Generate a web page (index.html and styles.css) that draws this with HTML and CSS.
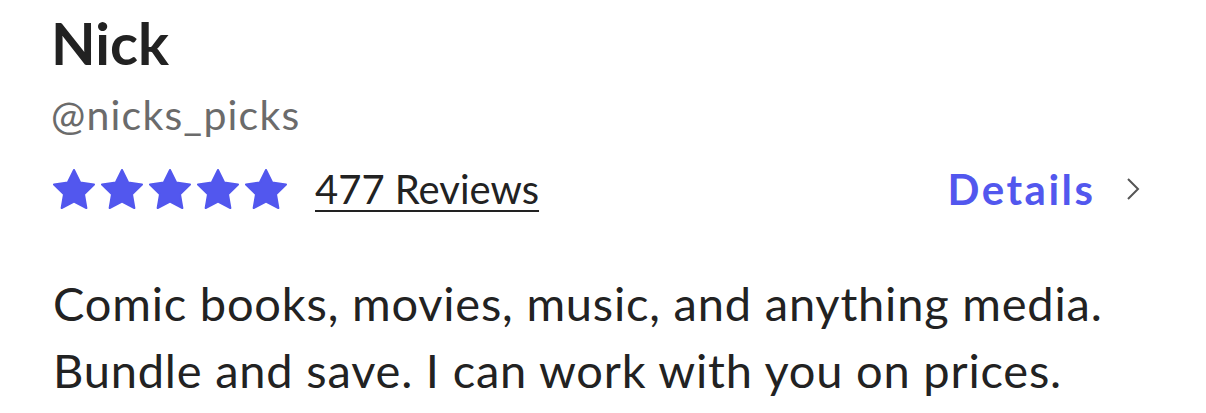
FILE: index.html
```html
<!DOCTYPE html>
<html lang="en">
<head>
<meta charset="utf-8">
<link rel="stylesheet" href="styles.css">
</head>
<body>
<main class="profile">
  <h1 class="name">Nick</h1>
  <div class="handle">@nicks_picks</div>
  <div class="rating-row">
    <div class="rating">
      <div class="stars">
        <svg class="star" viewBox="1.5 1.5 21 20" width="42" height="40"><polygon points="12,2 15.09,8.26 22,9.27 17,14.14 18.18,21.02 12,17.77 5.82,21.02 7,14.14 2,9.27 8.91,8.26"/></svg>
        <svg class="star" viewBox="1.5 1.5 21 20" width="42" height="40"><polygon points="12,2 15.09,8.26 22,9.27 17,14.14 18.18,21.02 12,17.77 5.82,21.02 7,14.14 2,9.27 8.91,8.26"/></svg>
        <svg class="star" viewBox="1.5 1.5 21 20" width="42" height="40"><polygon points="12,2 15.09,8.26 22,9.27 17,14.14 18.18,21.02 12,17.77 5.82,21.02 7,14.14 2,9.27 8.91,8.26"/></svg>
        <svg class="star" viewBox="1.5 1.5 21 20" width="42" height="40"><polygon points="12,2 15.09,8.26 22,9.27 17,14.14 18.18,21.02 12,17.77 5.82,21.02 7,14.14 2,9.27 8.91,8.26"/></svg>
        <svg class="star" viewBox="1.5 1.5 21 20" width="42" height="40"><polygon points="12,2 15.09,8.26 22,9.27 17,14.14 18.18,21.02 12,17.77 5.82,21.02 7,14.14 2,9.27 8.91,8.26"/></svg>
      </div>
      <a class="reviews" href="#">477 Reviews</a>
    </div>
    <a class="details" href="#">
      <span class="details-label">Details</span>
      <svg class="chevron" viewBox="0 0 14 24" width="14" height="24"><polyline points="2,2 12,12 2,22"/></svg>
    </a>
  </div>
  <p class="bio">Comic books, movies, music, and anything media.<br>Bundle and save. I can work with you on prices.</p>
</main>
</body>
</html>
```

FILE: styles.css
```css
html, body {
  margin: 0;
  padding: 0;
  background: #ffffff;
}

body {
  font-family: Lato, "Noto Sans", sans-serif;
  color: #222222;
}

.profile {
  padding: 8px 66px 0 51px;
}

.name {
  margin: 0;
  font-size: 58px;
  line-height: 70px;
  font-weight: 700;
  color: #222222;
}

.handle {
  margin-top: 13px;
  font-size: 41px;
  line-height: 48px;
  letter-spacing: 1.2px;
  color: #6b6b6b;
}

.rating-row {
  margin-top: 26px;
  padding-left: 2px;
  display: flex;
  align-items: center;
  justify-content: space-between;
  height: 48px;
}

.rating {
  display: flex;
  align-items: center;
  gap: 28px;
}

.stars {
  display: flex;
  gap: 6px;
}

.star {
  display: block;
  fill: #5257ee;
  stroke: #5257ee;
  stroke-width: 1;
  stroke-linejoin: round;
}

.reviews {
  font-size: 40px;
  line-height: 48px;
  color: #222222;
  text-decoration: underline;
  text-decoration-thickness: 2px;
  text-underline-offset: 6px;
}

.details {
  display: flex;
  align-items: center;
  gap: 33px;
  font-size: 42px;
  line-height: 48px;
  font-weight: 700;
  color: #5257ee;
  text-decoration: none;
}

.details-label {
  letter-spacing: 2.5px;
  margin-right: -2.5px;
}

.chevron {
  display: block;
  fill: none;
  stroke: #555555;
  stroke-width: 2;
}

.bio {
  margin: 57px 0 0 2px;
  font-size: 47px;
  line-height: 67px;
  letter-spacing: 0.8px;
  color: #222222;
}
```
